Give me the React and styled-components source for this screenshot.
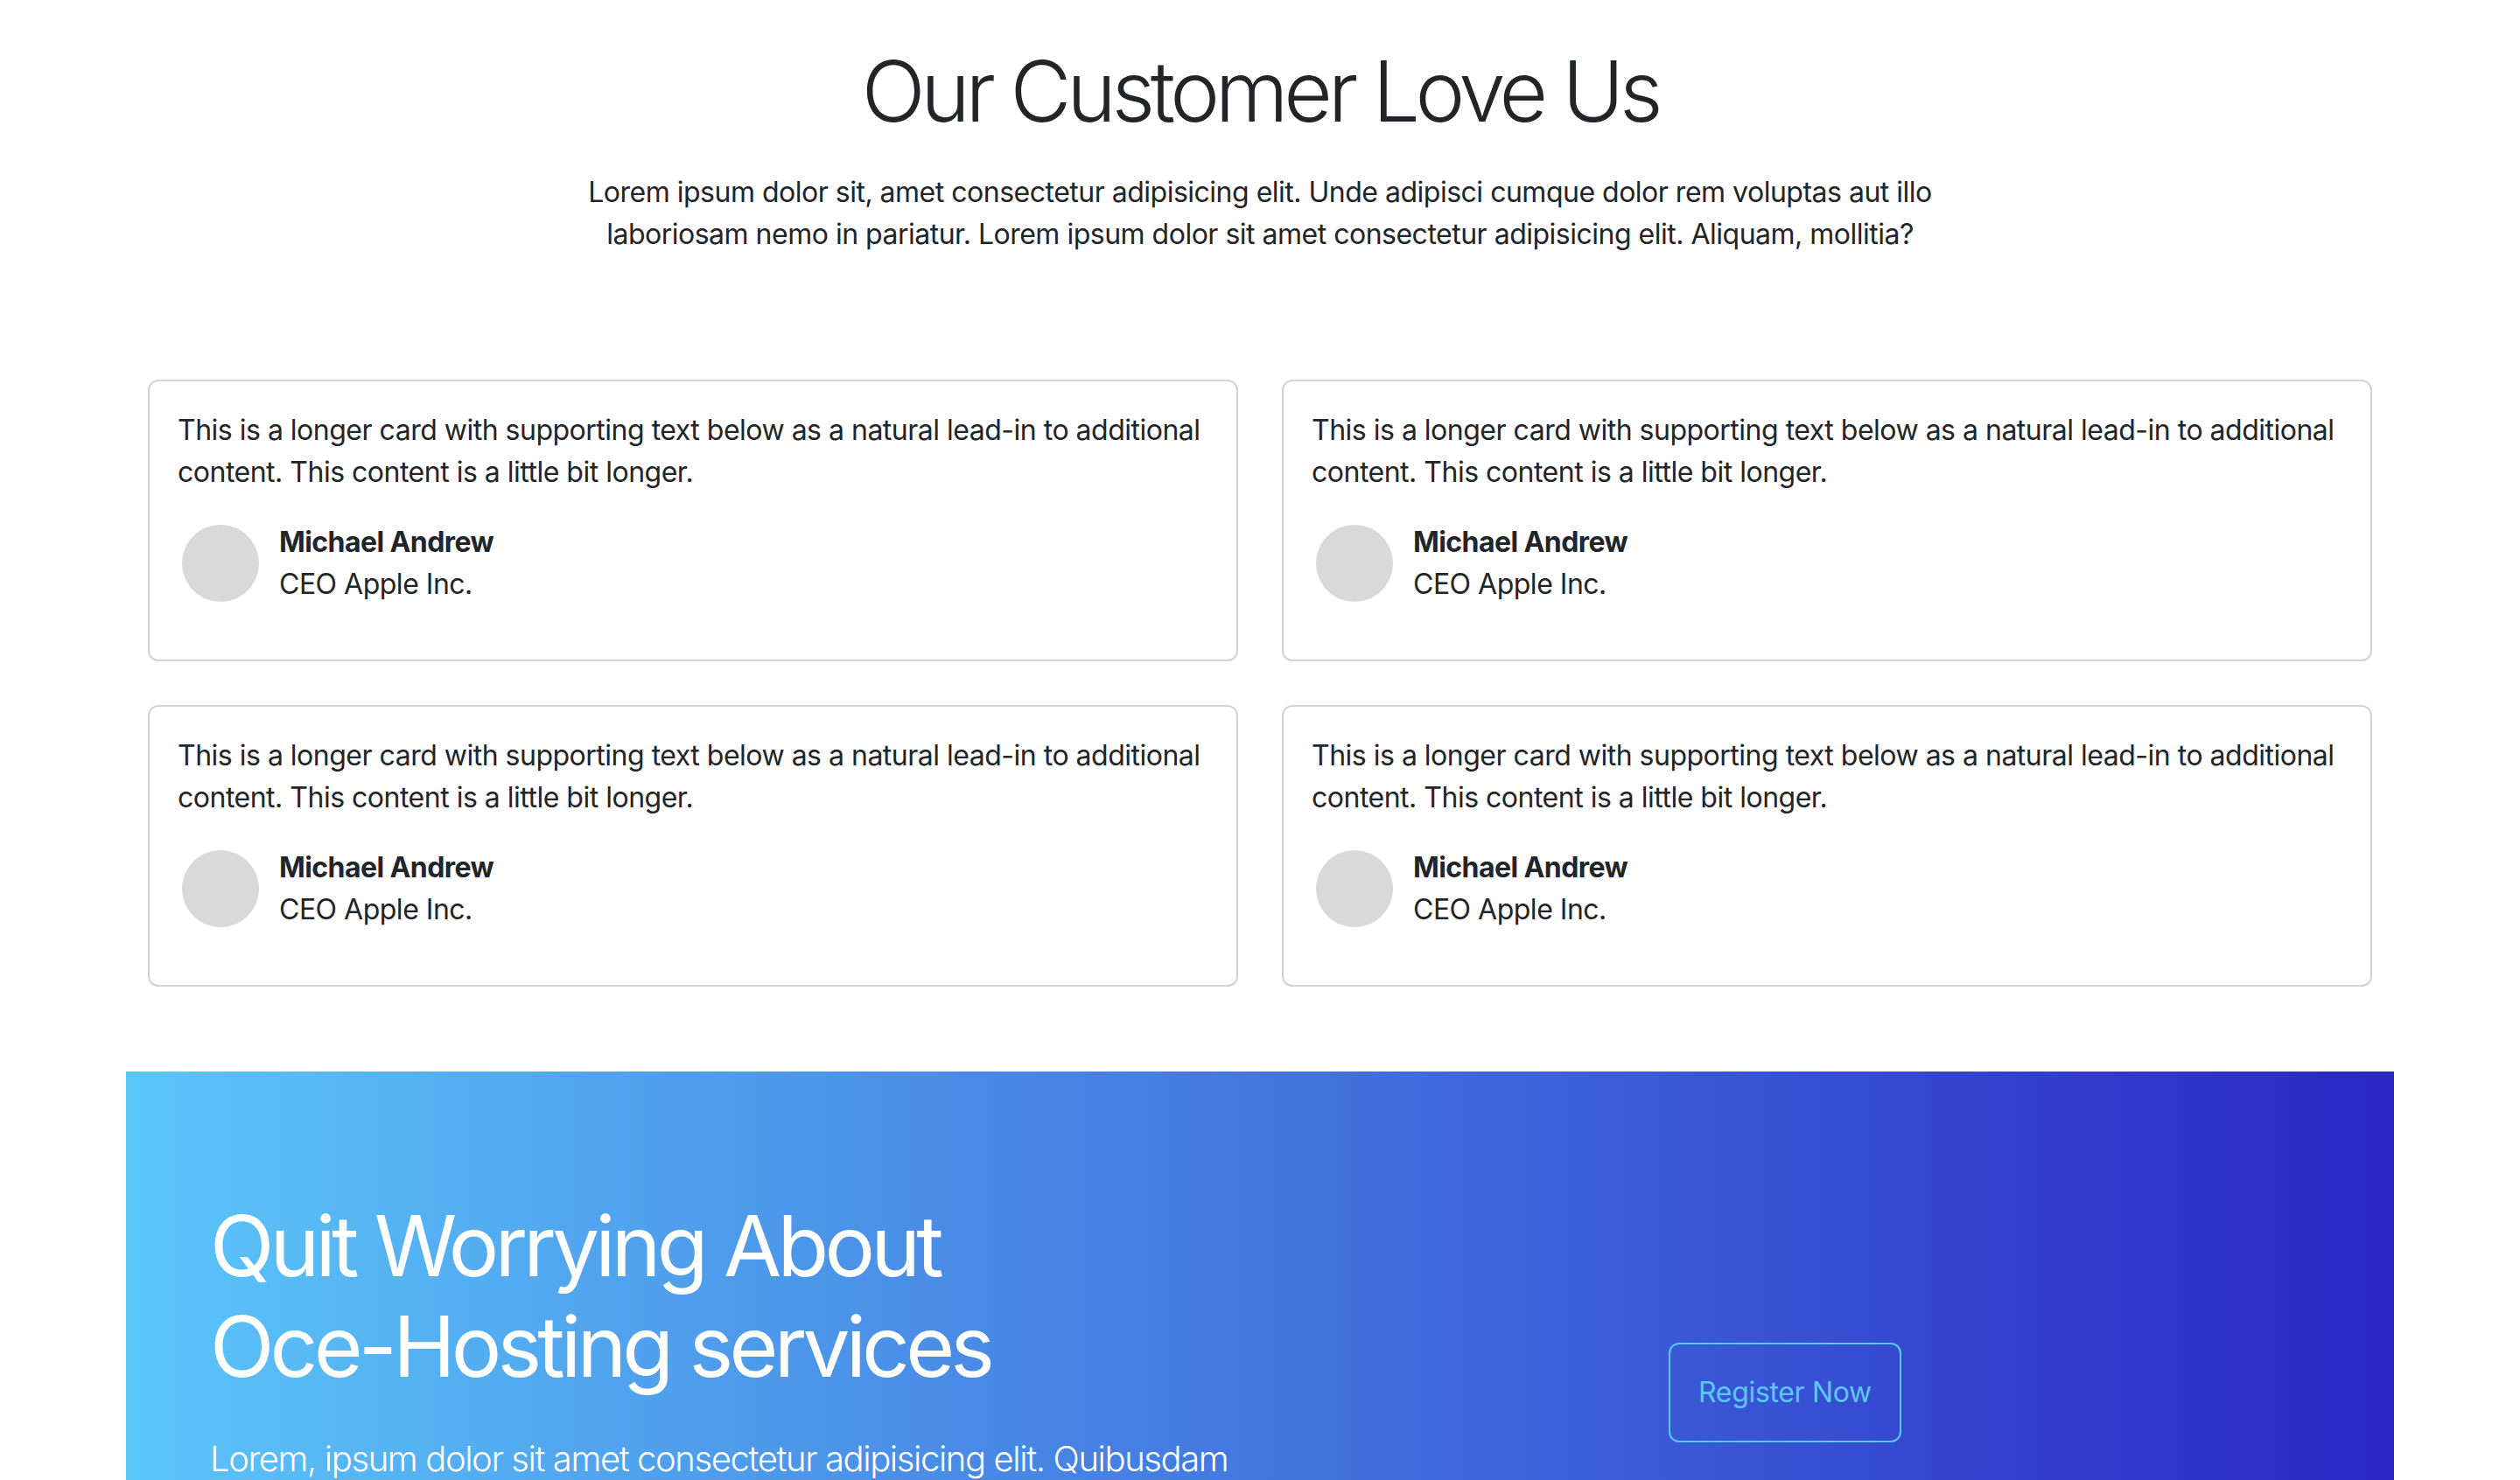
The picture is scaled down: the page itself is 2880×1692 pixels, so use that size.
import React from 'react'
import styled, { createGlobalStyle } from 'styled-components'

const GlobalStyle = createGlobalStyle`
  body {
    margin: 0;
    background: #fff;
    color: #212529;
    font-family: Inter, "Noto Sans", "Liberation Sans", sans-serif;
    letter-spacing: -0.031em;
  }
  * {
    box-sizing: border-box;
  }
`

const testimonials = [1, 2, 3, 4].map((id) => ({
  id,
  text: 'This is a longer card with supporting text below as a natural lead-in to additional content. This content is a little bit longer.',
  name: 'Michael Andrew',
  role: 'CEO Apple Inc.',
}))

const App = () => {
  return (
    <>
      <GlobalStyle />
      <Page>
        <Intro>
          <Title>Our Customer Love Us</Title>
          <Subtitle>
            Lorem ipsum dolor sit, amet consectetur adipisicing elit. Unde adipisci cumque dolor rem voluptas aut illo
            <br />
            laboriosam nemo in pariatur. Lorem ipsum dolor sit amet consectetur adipisicing elit. Aliquam, mollitia?
          </Subtitle>
        </Intro>
        <CardGrid>
          {testimonials.map((item) => (
            <Card key={item.id}>
              <CardText>{item.text}</CardText>
              <Person>
                <Avatar />
                <PersonInfo>
                  <Name>{item.name}</Name>
                  <Role>{item.role}</Role>
                </PersonInfo>
              </Person>
            </Card>
          ))}
        </CardGrid>
        <Banner>
          <BannerCopy>
            <BannerTitle>
              Quit Worrying About
              <br />
              Oce-Hosting services
            </BannerTitle>
            <Lead>
              Lorem, ipsum dolor sit amet consectetur adipisicing elit. Quibusdam voluptatum dolorem ratione, ipsam
              laborum eius excepturi nostrum alias facilis, magnam repudiandae quae placeat.
            </Lead>
          </BannerCopy>
          <BannerAction>
            <OutlineButton type='button'>Register Now</OutlineButton>
          </BannerAction>
        </Banner>
      </Page>
    </>
  )
}

const Page = styled.main`
  width: 2592px;
  margin: 0 auto;
  padding-top: 47px;
`

const Intro = styled.header`
  text-align: center;
`

const Title = styled.h1`
  margin: 0 0 34px;
  font-size: 96px;
  font-weight: 300;
  line-height: 1.2;
  letter-spacing: -0.055em;
`

const Subtitle = styled.p`
  margin: 0;
  font-size: 32px;
  line-height: 48px;
`

const CardGrid = styled.section`
  width: 2542px;
  margin: 142px auto 0;
  display: grid;
  grid-template-columns: 1fr 1fr;
  gap: 50px;
`

const Card = styled.article`
  border: 2px solid #d3d3d3;
  border-radius: 12px;
  padding: 32px 32px 62px;
`

const CardText = styled.p`
  margin: 0 0 32px;
  font-size: 32px;
  line-height: 48px;
`

const Person = styled.div`
  display: flex;
  align-items: center;
  gap: 23px;
`

const Avatar = styled.div`
  width: 88px;
  height: 88px;
  margin-left: 5px;
  border-radius: 50%;
  background: #d9d9d9;
  flex-shrink: 0;
`

const PersonInfo = styled.div`
  font-size: 32px;
  line-height: 48px;
`

const Name = styled.div`
  font-weight: 700;
  letter-spacing: -0.018em;
`

const Role = styled.div`
  font-weight: 400;
`

const Banner = styled.section`
  margin-top: 97px;
  padding: 142px 96px 96px;
  display: grid;
  grid-template-columns: 1fr 1fr;
  column-gap: 48px;
  align-items: center;
  background: linear-gradient(to right, #5bc6f9, #2a26c5);
  color: #fff;
`

const BannerCopy = styled.div``

const BannerTitle = styled.h2`
  margin: 0 0 40px;
  font-size: 96px;
  font-weight: 400;
  line-height: 1.2;
  letter-spacing: -0.05em;
`

const Lead = styled.p`
  margin: 0;
  font-size: 40px;
  font-weight: 300;
  line-height: 60px;
  letter-spacing: -0.035em;
`

const BannerAction = styled.div`
  text-align: center;
  padding-right: 24px;
`

const OutlineButton = styled.button`
  padding: 31px 32px;
  border: 2px solid #5ac8f5;
  border-radius: 12px;
  background: transparent;
  color: #5ac8f5;
  font-family: inherit;
  font-size: 32px;
  line-height: 48px;
  letter-spacing: -0.01em;
  cursor: pointer;
`

export default App
